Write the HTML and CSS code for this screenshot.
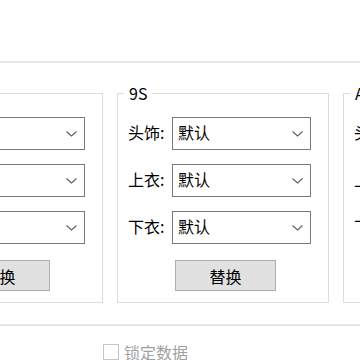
FILE: index.html
```html
<!DOCTYPE html>
<html lang="zh-CN">
<head>
    <meta charset="UTF-8">
    <meta name="viewport" content="width=device-width, initial-scale=1.0">
    <title>换装</title>
    <link rel="stylesheet" href="styles.css">
</head>
<body>
    <div class="top-area"></div>
    <div class="rule"></div>

    <div class="groups">
        <fieldset class="group">
            <legend>2B</legend>
            <div class="field"><span class="label">头饰:</span><div class="combo"><span>默认</span><svg width="11" height="6" viewBox="0 0 11 6"><path d="M0.5 0.5 L5.5 5 L10.5 0.5" fill="none" stroke="#5f5f5f" stroke-width="1.1"/></svg></div></div>
            <div class="field"><span class="label">上衣:</span><div class="combo"><span>默认</span><svg width="11" height="6" viewBox="0 0 11 6"><path d="M0.5 0.5 L5.5 5 L10.5 0.5" fill="none" stroke="#5f5f5f" stroke-width="1.1"/></svg></div></div>
            <div class="field"><span class="label">下衣:</span><div class="combo"><span>默认</span><svg width="11" height="6" viewBox="0 0 11 6"><path d="M0.5 0.5 L5.5 5 L10.5 0.5" fill="none" stroke="#5f5f5f" stroke-width="1.1"/></svg></div></div>
            <button class="btn">替换</button>
        </fieldset>

        <fieldset class="group">
            <legend>9S</legend>
            <div class="field"><span class="label">头饰:</span><div class="combo"><span>默认</span><svg width="11" height="6" viewBox="0 0 11 6"><path d="M0.5 0.5 L5.5 5 L10.5 0.5" fill="none" stroke="#5f5f5f" stroke-width="1.1"/></svg></div></div>
            <div class="field"><span class="label">上衣:</span><div class="combo"><span>默认</span><svg width="11" height="6" viewBox="0 0 11 6"><path d="M0.5 0.5 L5.5 5 L10.5 0.5" fill="none" stroke="#5f5f5f" stroke-width="1.1"/></svg></div></div>
            <div class="field"><span class="label">下衣:</span><div class="combo"><span>默认</span><svg width="11" height="6" viewBox="0 0 11 6"><path d="M0.5 0.5 L5.5 5 L10.5 0.5" fill="none" stroke="#5f5f5f" stroke-width="1.1"/></svg></div></div>
            <button class="btn">替换</button>
        </fieldset>

        <fieldset class="group">
            <legend>A2</legend>
            <div class="field"><span class="label">头饰:</span><div class="combo"><span>默认</span><svg width="11" height="6" viewBox="0 0 11 6"><path d="M0.5 0.5 L5.5 5 L10.5 0.5" fill="none" stroke="#5f5f5f" stroke-width="1.1"/></svg></div></div>
            <div class="field"><span class="label">上衣:</span><div class="combo"><span>默认</span><svg width="11" height="6" viewBox="0 0 11 6"><path d="M0.5 0.5 L5.5 5 L10.5 0.5" fill="none" stroke="#5f5f5f" stroke-width="1.1"/></svg></div></div>
            <div class="field"><span class="label">下衣:</span><div class="combo"><span>默认</span><svg width="11" height="6" viewBox="0 0 11 6"><path d="M0.5 0.5 L5.5 5 L10.5 0.5" fill="none" stroke="#5f5f5f" stroke-width="1.1"/></svg></div></div>
            <button class="btn">替换</button>
        </fieldset>
    </div>

    <div class="rule footer-rule"></div>

    <div class="options">
        <span class="check-box"></span>
        <span class="check-label">锁定数据</span>
    </div>
</body>
</html>
```

FILE: styles.css
```css
body {
    margin: 0;
    width: 360px;
    height: 360px;
    overflow: hidden;
    background-color: #ffffff;
    font-family: "Noto Sans CJK SC", "Noto Sans", sans-serif;
    font-size: 16px;
    color: #000000;
}

.top-area {
    height: 61px;
}

.rule {
    height: 2px;
    background-color: #e5e5e5;
}

.groups {
    display: flex;
    gap: 14px;
    margin-left: -109px;
    padding-top: 21px;
}

.group {
    flex: none;
    box-sizing: border-box;
    width: 212px;
    min-width: 0;
    margin: 0;
    padding: 15px 17px 11px 10px;
    border: 1px solid #dcdcdc;
}

.group legend {
    margin-left: -4px;
    padding: 0 5px;
    line-height: 18px;
}

.field {
    display: flex;
    align-items: center;
    height: 33px;
    margin-bottom: 14px;
}

.field:nth-of-type(3) {
    margin-bottom: 0;
}

.label {
    width: 44px;
    flex: none;
    line-height: 20px;
    padding-bottom: 4px;
}

.combo {
    box-sizing: border-box;
    width: 140px;
    height: 33px;
    border: 1px solid #7a7a7a;
    background-color: #ffffff;
    display: flex;
    align-items: center;
    justify-content: space-between;
    padding: 0 7px 0 5px;
}

.combo span {
    line-height: 20px;
    padding-bottom: 4px;
}

.btn {
    display: block;
    box-sizing: border-box;
    width: 101px;
    height: 31px;
    margin: 16px 0 0 47px;
    padding: 0;
    border: 1px solid #adadad;
    background-color: #e1e1e1;
    font-family: inherit;
    font-size: 16px;
    color: #000000;
}

.footer-rule {
    margin-top: 21px;
}

.options {
    display: flex;
    align-items: center;
    gap: 5px;
    padding: 18px 0 0 103px;
}

.check-box {
    box-sizing: border-box;
    width: 16px;
    height: 16px;
    border: 1px solid #c6c6c6;
    background-color: #ffffff;
}

.check-label {
    color: #a0a0a0;
    line-height: 16px;
}
```
